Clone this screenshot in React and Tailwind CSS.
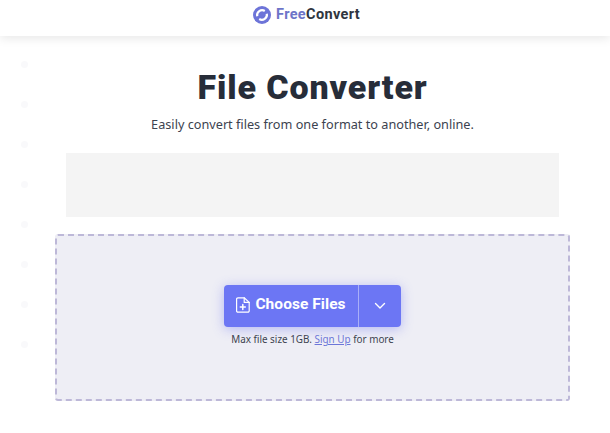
import React from "react";

const fuente = { fontFamily: '"Noto Sans", "Liberation Sans", sans-serif' };
const fuenteTitulo = { fontFamily: 'Roboto, "Liberation Sans", sans-serif' };

const Logo = () => (
  <svg width="18" height="18" viewBox="0 0 18 18">
    <circle cx="9" cy="9" r="9" fill="#6d74d8" />
    <path d="M4.2 10.2a5 5 0 0 1 7.6-5.2" fill="none" stroke="#fff" strokeWidth="2.2" />
    <path d="M13.8 7.8a5 5 0 0 1-7.6 5.2" fill="none" stroke="#fff" strokeWidth="2.2" />
    <circle cx="9" cy="9" r="2.6" fill="#6d74d8" />
  </svg>
);

const IconoArchivo = () => (
  <svg width="14" height="16" viewBox="0 0 14 16" fill="none" stroke="#fff" strokeWidth="1.2" strokeLinejoin="round" strokeLinecap="round">
    <path d="M2 .8h6.2l5 4.6v8.3a1.4 1.4 0 0 1-1.4 1.5H2a1.4 1.4 0 0 1-1.4-1.5V2.3A1.4 1.4 0 0 1 2 .8z" />
    <path d="M8.2.8v4.6h5" />
    <path d="M6.8 7.5v5M4.3 10h5" strokeWidth="1.5" />
  </svg>
);

const App = () => {
  const puntos = [64, 104, 144, 184, 224, 264, 304, 344];

  return (
    <div className="relative w-[610px] h-[433px] overflow-hidden bg-white" style={fuente}>
      {/* puntos del fondo */}
      {puntos.map((y) => (
        <div key={y} className="absolute left-[21px] w-[7px] h-[7px] rounded-full bg-[#f9f9fb]" style={{ top: y - 3 }} />
      ))}

      <header className="relative h-[36px] flex items-center justify-center gap-[5px] bg-white shadow-[0_2px_10px_rgba(0,0,0,0.10)] pl-[3px] pb-[6px]" style={fuenteTitulo}>
        <Logo />
        <span className="text-[14.5px] font-bold leading-none tracking-[0.35px]">
          <span className="text-[#6d74c8]">Free</span>
          <span className="text-[#2f3540]">Convert</span>
        </span>
      </header>

      <main className="relative flex flex-col items-center ml-[55px] w-[515px]">
        <h1 className="mt-[30px] h-[42px] text-[34px] leading-[42px] font-black tracking-[0.9px] text-[#272d39]" style={fuenteTitulo}>
          File Converter
        </h1>
        <p className="mt-[7px] mb-[1px] h-[18px] text-[12.7px] leading-[18px] text-[#3c4350]">
          Easily convert files from one format to another, online.
        </p>
        <div className="mt-[19px] w-[493px] h-[64px] bg-[#f4f4f4]" />

        <section className="mt-[17px] w-[515px] h-[167px] flex flex-col items-center bg-[#eeeef5] border-2 border-dashed border-[#bdb8d8] rounded-[3px]">
          <div className="mt-[49px] flex h-[42px] w-[177px] rounded-[4px] bg-[#6c76f4] shadow-[0_2px_12px_rgba(108,118,244,0.45)] text-white">
            <button className="w-[135px] flex items-center justify-center gap-[5px] border-r border-[#a9aff8] pb-[2px]">
              <IconoArchivo />
              <span className="text-[15.5px] font-bold tracking-[0.05px]" style={fuenteTitulo}>Choose Files</span>
            </button>
            <button className="flex-1 flex items-center justify-center">
              <svg width="12" height="8" viewBox="0 0 12 8" fill="none" stroke="#fff" strokeWidth="1.4" strokeLinecap="round" strokeLinejoin="round">
                <path d="M1.5 1.5L6 6l4.5-4.5" />
              </svg>
            </button>
          </div>
          <p className="mt-[5px] text-[9.9px] leading-[14px] text-[#3c4350]">
            Max file size 1GB. <a className="text-[#6c76d8] underline">Sign Up</a> for more
          </p>
        </section>
      </main>
    </div>
  );
};

export default App;
